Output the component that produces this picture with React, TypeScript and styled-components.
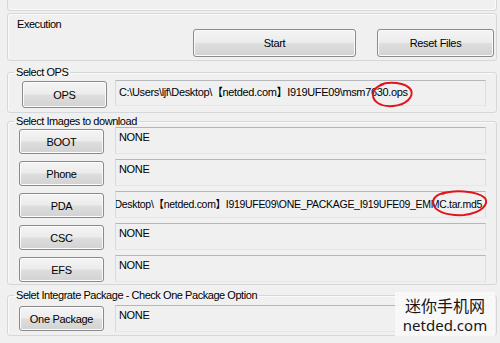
import React from "react";
import styled, { createGlobalStyle } from "styled-components";

const Global = createGlobalStyle`
  html, body { margin: 0; padding: 0; background: #f0f0f0; }
  body {
    font-family: "Liberation Sans", "Noto Sans CJK SC", sans-serif;
    font-size: 11px;
    color: #000;
  }
`;

const UI_FONT = `"Liberation Sans", "Noto Sans CJK SC", sans-serif`;

const Page = styled.div`
  position: relative;
  width: 500px;
  height: 343px;
  overflow: hidden;
  background: #f0f0f0;
  padding: 0 3px 0 7px;
  box-sizing: border-box;
  display: flex;
  flex-direction: column;
  font-family: ${UI_FONT};
  font-size: 11px;
  letter-spacing: -0.45px;
`;

const Stub = styled.div`
  height: 11px;
  box-sizing: border-box;
  border: 1px solid #d3d8dc;
  border-top: none;
  border-radius: 0 0 3px 3px;
  box-shadow: inset -1px -1px 0 #fafafa;
`;

const ExecBox = styled.div`
  margin-top: 2px;
  height: 48px;
  box-sizing: border-box;
  border: 1px solid #d3d8dc;
  border-radius: 3px;
  box-shadow: inset 1px 1px 0 #fafafa;
  display: flex;
  align-items: flex-start;
  padding: 4px 2px 0 8px;
`;

const Title = styled.div`
  flex: 1;
  line-height: 13px;
  padding-left: 1px;
`;

const ButtonRow = styled.div`
  margin-top: 11px;
  display: flex;
  gap: 21px;
`;

const Btn = styled.button<{ $w: number; $h: number; $mt?: number }>`
  box-sizing: border-box;
  flex: none;
  width: ${(p) => p.$w}px;
  height: ${(p) => p.$h}px;
  margin-top: ${(p) => p.$mt ?? 0}px;
  padding: 0;
  border: 1px solid #8a8a8a;
  border-radius: 3px;
  background: linear-gradient(#f4f4f4 0%, #ececec 48%, #dedede 52%, #d2d2d2 100%);
  box-shadow: inset 0 0 0 1px #fbfbfb;
  font-family: ${UI_FONT};
  font-size: 11px;
  letter-spacing: -0.3px;
  color: #000;
`;

const Group = styled.fieldset<{ $mt: number }>`
  margin: ${(p) => p.$mt}px 0 0 0;
  padding: 0;
  min-width: 0;
  border: 1px solid #d3d8dc;
  border-radius: 3px;
  box-shadow: inset 1px 1px 0 #fafafa;
`;

const Legend = styled.legend`
  margin-left: 6px;
  padding: 0 2px;
  line-height: 12px;
  font-size: 11px;
`;

const GroupBody = styled.div<{ $pt: number; $pb: number; $pl: number }>`
  display: flex;
  flex-direction: column;
  gap: 5px;
  padding: ${(p) => p.$pt}px 10px ${(p) => p.$pb}px ${(p) => p.$pl}px;
`;

const Row = styled.div<{ $gap: number }>`
  display: flex;
  align-items: flex-start;
  gap: ${(p) => p.$gap}px;
`;

const Field = styled.div<{
  $h: number;
  $end?: boolean;
  $pt?: number;
  $fs?: number;
  $ls?: number;
}>`
  flex: 1;
  min-width: 0;
  height: ${(p) => p.$h}px;
  box-sizing: border-box;
  border: 1px solid;
  border-color: #b4b6bb #d9dce0 #e4e6ea #d6d9dd;
  background: #f0f0f0;
  display: flex;
  align-items: flex-start;
  justify-content: ${(p) => (p.$end ? "flex-end" : "flex-start")};
  padding: ${(p) => p.$pt ?? 4}px 3px 0 3px;
  overflow: hidden;
  white-space: nowrap;
  line-height: 13px;
  font-size: ${(p) => p.$fs ?? 11}px;
  letter-spacing: ${(p) => p.$ls ?? -0.35}px;
`;

const Mark = styled.svg`
  position: absolute;
  overflow: visible;
  pointer-events: none;
`;

const Watermark = styled.div`
  position: absolute;
  left: 395px;
  top: 292px;
  width: 100px;
  height: 44px;
  background: rgba(249, 249, 249, 0.92);
  display: flex;
  flex-direction: column;
  align-items: center;
  box-sizing: border-box;
  color: #161616;
  letter-spacing: 0;
`;

const WmCn = styled.div`
  font-family: "Noto Sans CJK SC", sans-serif;
  font-size: 16px;
  line-height: 19px;
  margin-top: 4px;
`;

const WmEn = styled.div`
  font-family: "Noto Sans", "Open Sans", sans-serif;
  font-size: 15px;
  line-height: 18px;
  margin-top: 1px;
`;

const images = [
  { label: "BOOT", value: "NONE" },
  { label: "Phone", value: "NONE" },
  {
    label: "PDA",
    value: "Desktop\\【netded.com】I919UFE09\\ONE_PACKAGE_I919UFE09_EMMC.tar.md5",
    end: true,
  },
  { label: "CSC", value: "NONE" },
  { label: "EFS", value: "NONE" },
];

export default function App() {
  return (
    <>
      <Global />
      <Page>
        <Stub />
        <ExecBox>
          <Title>Execution</Title>
          <ButtonRow>
            <Btn $w={163} $h={28}>Start</Btn>
            <Btn $w={117} $h={28}>Reset Files</Btn>
          </ButtonRow>
        </ExecBox>

        <Group $mt={5}>
          <Legend>Select OPS</Legend>
          <GroupBody $pt={2} $pb={4} $pl={14}>
            <Row $gap={8}>
              <Btn $w={85} $h={27} $mt={1}>OPS</Btn>
              <Field $h={26} $pt={5}>
                C:\Users\ljf\Desktop\【netded.com】I919UFE09\msm7630.ops
              </Field>
            </Row>
          </GroupBody>
        </Group>

        <Group $mt={2}>
          <Legend>Select Images to download</Legend>
          <GroupBody $pt={0} $pb={2} $pl={11}>
            {images.map((it) => (
              <Row $gap={11} key={it.label}>
                <Btn $w={85} $h={25} $mt={2}>{it.label}</Btn>
                <Field
                  $h={27}
                  $end={it.end}
                  $pt={it.end ? 6 : 3}
                  $fs={it.end ? 10.5 : 11}
                  $ls={it.end ? -0.3 : -0.35}
                >
                  {it.value}
                </Field>
              </Row>
            ))}
          </GroupBody>
        </Group>

        <Group $mt={4}>
          <Legend>Selet Integrate Package - Check One Package Option</Legend>
          <GroupBody $pt={4} $pb={3} $pl={11}>
            <Row $gap={11}>
              <Btn $w={85} $h={25} $mt={1}>One Package</Btn>
              <Field $h={27} $pt={3}>NONE</Field>
            </Row>
          </GroupBody>
        </Group>

        <Mark style={{ left: 372, top: 82 }} width="41" height="25" viewBox="0 0 41 25">
          <path
            d="M8 3 C16 -1 34 0 39 8 C42 15 34 23 21 24 C9 25 1 20 1 13 C1 7 5 4 12 2"
            fill="none"
            stroke="#e0141a"
            strokeWidth="2"
          />
        </Mark>
        <Mark style={{ left: 432, top: 190 }} width="56" height="26" viewBox="0 0 56 26">
          <path
            d="M10 4 C20 0 44 0 53 8 C57 14 50 23 32 25 C14 26 2 21 1 13 C1 7 7 3 18 2"
            fill="none"
            stroke="#e0141a"
            strokeWidth="2"
          />
        </Mark>

        <Watermark>
          <WmCn>迷你手机网</WmCn>
          <WmEn>netded.com</WmEn>
        </Watermark>
      </Page>
    </>
  );
}
